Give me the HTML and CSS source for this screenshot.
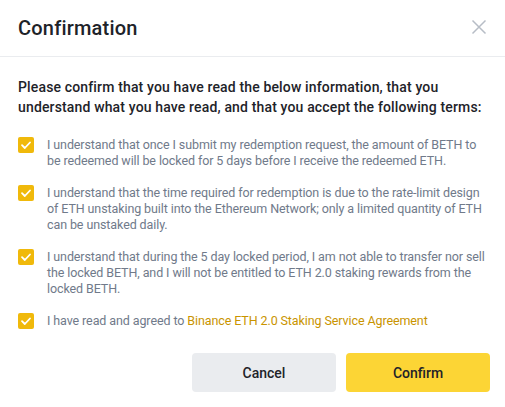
FILE: index.html
```html
<!DOCTYPE html>
<html>
<head>
<meta charset="utf-8">
<link rel="stylesheet" href="styles.css">
</head>
<body>
<div class="modal">
  <div class="header">
    <div class="title">Confirmation</div>
    <svg class="close" width="16" height="16" viewBox="0 0 16 16"><path d="M1.5 1.5L14.5 14.5M14.5 1.5L1.5 14.5" stroke="#b7bdc6" stroke-width="1.5" fill="none"/></svg>
  </div>
  <div class="body">
    <p class="intro">Please confirm that you have read the below information, that you understand what you have read, and that you accept the following terms:</p>
    <div class="items">
      <div class="item">
        <span class="check"><svg width="16" height="16" viewBox="0 0 16 16"><path d="M4 8.2L6.8 11L12 5.5" stroke="#fff" stroke-width="1.8" fill="none" stroke-linecap="round" stroke-linejoin="round"/></svg></span>
        <span class="text">I understand that once I submit my redemption request, the amount of BETH to be redeemed will be locked for 5 days before I receive the redeemed ETH.</span>
      </div>
      <div class="item">
        <span class="check"><svg width="16" height="16" viewBox="0 0 16 16"><path d="M4 8.2L6.8 11L12 5.5" stroke="#fff" stroke-width="1.8" fill="none" stroke-linecap="round" stroke-linejoin="round"/></svg></span>
        <span class="text">I understand that the time required for redemption is due to the rate-limit design of ETH unstaking built into the Ethereum Network; only a limited quantity of ETH can be unstaked daily.</span>
      </div>
      <div class="item">
        <span class="check"><svg width="16" height="16" viewBox="0 0 16 16"><path d="M4 8.2L6.8 11L12 5.5" stroke="#fff" stroke-width="1.8" fill="none" stroke-linecap="round" stroke-linejoin="round"/></svg></span>
        <span class="text">I understand that during the 5 day locked period, I am not able to transfer nor sell the locked BETH, and I will not be entitled to ETH 2.0 staking rewards from the locked BETH.</span>
      </div>
      <div class="item">
        <span class="check"><svg width="16" height="16" viewBox="0 0 16 16"><path d="M4 8.2L6.8 11L12 5.5" stroke="#fff" stroke-width="1.8" fill="none" stroke-linecap="round" stroke-linejoin="round"/></svg></span>
        <span class="text">I have read and agreed to <a class="link">Binance ETH 2.0 Staking Service Agreement</a></span>
      </div>
    </div>
    <div class="actions">
      <button class="btn cancel">Cancel</button>
      <button class="btn confirm">Confirm</button>
    </div>
  </div>
</div>
</body>
</html>
```
FILE: styles.css
```css
html, body {
  margin: 0;
  padding: 0;
  background: #fff;
}
body {
  font-family: Roboto, "Liberation Sans", sans-serif;
  color: #1e2329;
}
.modal {
  width: 505px;
}
.header {
  height: 56px;
  border-bottom: 1px solid #eaecef;
  display: flex;
  align-items: center;
  justify-content: space-between;
  padding: 0 18px 0 18px;
}
.title {
  font-size: 20px;
  font-weight: 500;
  letter-spacing: 0.2px;
  color: #1e2329;
}
.close {
  display: block;
  margin-top: -2px;
}
.body {
  padding: 20px 15px 0 18px;
}
.intro {
  margin: 0;
  font-size: 14px;
  line-height: 20px;
  font-weight: 500;
  letter-spacing: 0.15px;
  color: #1e2329;
}
.items {
  margin-top: 20px;
  display: flex;
  flex-direction: column;
  gap: 16px;
}
.item {
  display: flex;
  align-items: flex-start;
  gap: 13px;
}
.check {
  flex: none;
  width: 16px;
  height: 16px;
  border-radius: 2px;
  background: #f0b90b;
  display: flex;
}
.text {
  font-size: 12.5px;
  letter-spacing: -0.1px;
  line-height: 16px;
  color: #707a8a;
}
.link {
  color: #c99400;
}
.actions {
  margin-top: 24px;
  display: flex;
  justify-content: flex-end;
  gap: 10px;
}
.btn {
  width: 144px;
  height: 39px;
  border: none;
  border-radius: 4px;
  font-family: inherit;
  font-size: 14px;
  font-weight: 500;
  color: #1e2329;
}
.cancel {
  background: #eaecef;
}
.confirm {
  background: #fcd535;
}
```
